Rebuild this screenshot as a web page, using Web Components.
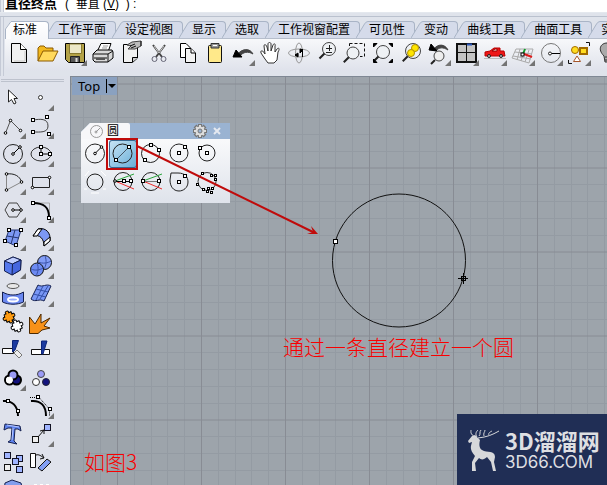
<!DOCTYPE html>
<html lang="zh-CN">
<head>
<meta charset="utf-8">
<title>Rhino</title>
<style>
html, body { margin: 0; height: 100%; overflow: hidden; }
body { font: 12px/16px "Liberation Sans", "Noto Sans CJK SC", sans-serif; color: #000; }
</style>
</head>
<body>
<cad-app></cad-app>
<script>
const sq = (x, y, f = '#fff', s = 3) => `<rect x="${x - s / 2}" y="${y - s / 2}" width="${s}" height="${s}" fill="${f}" stroke="#000"/>`;
const dot = (x, y) => `<circle cx="${x}" cy="${y}" r="1.3" fill="#fff" stroke="#000"/>`;
const circ = (x, y, r, f = 'none', s = '#222') => `<circle cx="${x}" cy="${y}" r="${r}" fill="${f}" stroke="${s}"/>`;
const p = (d, f = 'none', s = '#000', w = 1) => `<path d="${d}" fill="${f}" stroke="${s}" stroke-width="${w}"/>`;
const lens = (x, y, r) => circ(x, y, r, '#eef1f4', '#444') + p(`M${x - r * .7} ${y + r * .7}L${x - r * .7 - 5} ${y + r * .7 + 5}`, 'none', '#222', 2);
const blueSq = (x, y) => `<rect x="${x - 3}" y="${y - 3}" width="6" height="6" fill="#9fb4ff" stroke="#112"/>`;
const puzzle = (x, y, f) => `<g transform="translate(${x} ${y}) rotate(-25)">${p('M-3.500 -4H-1.500C-3 -7 3 -7 1.500 -4H4V-1.500C7 -3 7 3 4 1.500V4H1.500C3 7 -3 7 -1.500 4H-4V1.500C-7 3 -7 -3 -4 -1.500Z', f)}</g>`;

const ICONS = {
  doc: p('M6.500 4.500H15.500L21.500 10.500V23.500H6.500Z', '#f1f1f1') + p('M15.500 4.500V10.500H21.500', '#fff') + p('M20 12V22H9', 'none', '#c8c8c8'),
  open: p('M5 22V9L7 7H11L13 9H20V12', '#f2b91e', '#8b5a00') + p('M5 22L10 12H25L20 22Z', '#ffd95c', '#8b5a00'),
  save: p('M4.500 4.500H23.500V23.500H7.500L4.500 20.500Z', '#b3a247') + p('M8.500 5V14.500H20.500V5Z', '#ece8c8', '#887a30') + p('M9.500 23V17.500H18.500V23', '#555', '#222') + p('M15.500 19V23', 'none', '#ddd', 2),
  print: p('M8 13L12 4.500H22L19 13Z', '#fff') + p('M13 9H18M14 7H19', 'none', '#999') + p('M4 15L8 11H23L24 13V19L19 23H6L4 21Z', '#d9d9d9') + p('M4 15H19L24 12M19 15V23M5 19H18', 'none', '#111') + p('M7 20H16', 'none', '#555', 2),
  props: p('M6.500 5.500H20.500V19L15.500 23.500H6.500Z', '#f1f1f1') + p('M15.500 23V18.500H21', '#ccc') + p('M10 6L15 3L24 2V7L18 10H11L14 7Z', '#bbb', '#444') + p('M24 2V7M13 7L18 5M14 9L19 7', 'none', '#111'),
  cut: p('M8 6L17 18M20 6L11 18', 'none', '#444', 2) + p('M9 7L14 14L19 7', 'none', '#ccc') + circ(9.5, 20, 2.5, 'none', '#667') + circ(18.5, 20, 2.5, 'none', '#667'),
  copy: p('M7.500 4.500H13L17.500 9V18.500H7.500Z', '#fff') + p('M12.500 9.500H18L22.500 14V23.500H12.500Z', '#f3f3f3') + p('M18 9.500V14H22', '#fff'),
  paste: `<rect x="7.500" y="6.500" width="13" height="17" rx="1" fill="#ffe98a" stroke="#111"/>` + p('M10 9V4.500H18V9Z', '#999', '#333') + p('M12 6.500H16', 'none', '#fff'),
  undo: p('M8 16C13 9 21 9 24 15C19 12 14 13 11 17Z', '#444', '#444') + p('M4 18L7 11L13 18Z', '#000'),
  hand: p('M8 20L4 14C3 11 6 11 8 15L7 7C7 5 9 5 10 8L11 12L11 5C11 3 14 3 14 5V12L16 6C17 4 19 5 18 7L18 13L20 10C22 8 23 10 21 13L20 21L17 24H11Z', '#fff', '#333'),
  orbit: `<ellipse cx="14" cy="14" rx="10.500" ry="4" fill="none" stroke="#999"/><ellipse cx="14" cy="14" rx="3.500" ry="10" fill="none" stroke="#999"/>` + p('M10 16L13 14V18ZM18 11L15 10V14Z', '#000') + p('M13.500 16H10M17.500 10V18', 'none', '#000'),
  zoom: lens(16, 10, 6.5) + p('M13 9.500H19M16.500 6V12M13 13.500H19', 'none', '#222'),
  window: p('M8.500 4.500H23.500V17.500H19M8.500 4.500V7', 'none', '#111').replace('/>', ' stroke-dasharray="3 2"/>') + lens(12, 14, 6),
  extents: lens(14, 13, 6.5) + p('M4.500 4.500H8L4.500 8ZM23.500 4.500H20L23.500 8ZM4.500 23.500V20L8 23.500ZM23.500 23.500V20L20 23.500Z', '#000'),
  selected: lens(16, 12, 7.5) + circ(18, 9, 3.5, '#ffe500', '#b09000') + circ(14, 14, 3.5, '#ffe500', '#b09000'),
  undoview: p('M8 11C13 4 20 5 23 11C18 8 14 8 11 12Z', '#444', '#444') + p('M4 11L6 5L12 12Z', '#000') + circ(14, 17, 5, '#eee', '#444') + p('M10 21L6 25', 'none', '#222', 2),
  four: p('M4 5H23V23H4Z', '#c4c4c4', '#111', 2) + p('M13.500 4V23M4 13.500H23', 'none', '#111') + p('M14 5.500H19', 'none', '#2855b8', 2),
  car: p('M4 17V13L9 12L13 9H19V12H23L24 17Z', '#ed1717', '#b00') + p('M11 12L14 10H16V12Z', '#fff', '#900') + circ(8, 17, 1.5, '#bbb') + circ(20, 17, 1.5, '#bbb') + p('M3 19.500H25', 'none', '#bbb'),
  plane: p('M7 10H24L20 24L3 19ZM11 10L8 21M16 10L12 22M20 11L16 23M6 13L23 15M4 17L22 20', 'none', '#aaa') + p('M14 15L16 10', 'none', '#119c2a', 2) + p('M15 15L23 18', 'none', '#df1b1b', 2) + sq(13.5, 15.5),
  circle: circ(14, 14, 9.5, 'none', '#777') + p('M14 14.500H23') + circ(13, 14.5, 1.5, '#fff'),
  objects: circ(10, 11, 3.5, '#ffdc20', '#a16a00') + p('M15 9H22V15H15Z', '#ffdc20', '#a16a00', 2) + p('M12 17L15.500 22.500H8.500Z', '#fff', '#a6562a') + p('M21 3.500H24.500V7M3.500 21V24.500H7', 'none', '#111'),
  bulb: p('M11 17C4 10 8 4 14 4C20 4 24 10 17 17L16 23H12Z', '#aaa', '#333') + p('M12 18H16M12 21H16', 'none', '#333'),

  pointer: p('M8.500 6V18L11.500 15.500L14 20L16 19L14 14.500H17.500Z', '#fff', '#222'),
  point: circ(12.500, 13.500, 2, '#fff', '#333'),
  polyline: p('M5.500 21L10.500 8.500L20.500 18.500', 'none', '#555') + dot(5.5, 21) + dot(10.5, 8.5) + dot(20.5, 18.5),
  curve: p('M5 8C12 7 20 6 20 14C20 21 12 20 5 20', 'none', '#444') + sq(5, 8) + sq(19, 5) + sq(5, 20) + sq(21, 22),
  circ1: circ(13, 14, 9.5) + p('M13 14L20 7') + dot(13, 14) + dot(20, 7),
  ellipse: `<ellipse cx="13" cy="14" rx="10" ry="7" fill="none" stroke="#333"/>` + p('M13 7V14H22') + sq(13, 7) + sq(13, 14) + sq(22, 14),
  arc: p('M6.500 6C14 5 20 8 21.500 14', 'none', '#222') + p('M6.500 6V22L21.500 14', 'none', '#888') + dot(6.5, 6) + dot(21.5, 14) + dot(6.5, 22),
  rect: p('M4.500 9.500H21.500V19.500H4.500Z', 'none', '#222') + dot(4.5, 19.5) + dot(21.5, 9.5),
  poly: p('M5 14L9 7H17L21.500 14L17 21H9Z', 'none', '#444') + p('M13 14H20') + dot(13, 14) + dot(21, 14),
  fillet: p('M5 7H21.500V21', 'none', '#aaa') + p('M5 7C16 7 21 11 21 21', 'none', '#000', 2) + sq(5, 7) + sq(21, 22),
  surf: p('M9 6H21L16 22L5 17Z', '#7c98f3', '#24356f') + p('M15 6L11 20M7 12L19 14', 'none', '#24356f') + sq(9, 6) + sq(21, 6) + sq(16, 21) + sq(5, 17),
  sweep: p('M10 5C18 3 23 9 22 17L16 22C16 15 12 10 5 12Z', '#7c98f3') + p('M10 5L14 5L9 12L5 12ZM22 13V17L16 22V18Z', '#fff'),
  cube: p('M4.500 9L13 5L21 8L20.500 18L12 23L4.500 19Z', '#5578ed', '#15204f') + p('M4.500 9L13 5L21 8L12.500 12Z', '#c0ceff', '#15204f') + p('M12.500 12L21 8L20.500 18L12 23Z', '#4667df', '#15204f'),
  spheres: circ(16.5, 10.5, 7, '#839df6', '#111') + p('M17 4C19 9 18 14 16 17M10 10C15 12 20 11 23 9', 'none', '#3a52a8') + circ(9, 17.5, 6.5, '#6c8af2', '#111') + p('M9 11C11 16 10 20 8 24M3 17C7 19 12 18 15 16', 'none', '#3a52a8'),
  project: `<ellipse cx="13" cy="6" rx="6" ry="2.500" fill="#e8e8e8" stroke="#555"/>` + p('M2.500 12C9 16 17 16 23.500 12V22C17 25 9 25 2.500 22Z', '#6b88f0', '#15204f') + `<ellipse cx="13" cy="19.500" rx="5" ry="2" fill="#9cb0ff" stroke="#fff" stroke-width="2"/>`,
  mesh: p('M10 5C15 8 18 3 23 6L16 21C11 18 8 23 3 19Z', '#7997f6', '#15204f') + p('M15 6L8 20M20 6L12 19M8 9L20 12M5 14L18 17', 'none', '#3450a8'),
  puzzle: puzzle(9, 9, '#ff9b10') + puzzle(17, 18, '#fff'),
  explode: p('M1.500 25.500V9L7 16L13 6V15L22 10L16 18L22 20L14 22L10 25.500Z', '#f79118', '#4c2900'),
  trim: p('M2.500 12.500H13.500V17.500H2.500Z', '#fff', '#111') + p('M12.500 4.500H18.500L15 14L12.500 16Z', '#1b3aa0', '#0b2478') + p('M14 17L17 14L22 19L19 22Z', '#eee', '#777'),
  split: p('M3.500 13.500H21.500V18.500H3.500Z', '#fff', '#111') + p('M13.500 5H19L15 18H13.500Z', '#1b3aa0', '#0b2478'),
  group: `<g stroke-width="2">${circ(9.5, 16, 4.5, '#fff', '#000')}${circ(16.5, 16, 4.5, '#12127d', '#000')}${circ(13, 11, 4.5, '#9a9af6', '#000')}</g>` + circ(9.5, 16, 3, '#fff', '#fff'),
  ungroup: circ(13, 10, 3.5, '#9a9af6', '#444') + circ(8, 18, 3.5, '#fff', '#333') + circ(18, 18, 3.5, '#12127d', '#223'),
  edit: p('M3 9C12 8 18 14 18 24', 'none', '#000', 2) + sq(8, 9) + sq(18, 19),
  points: p('M3 9C13 8 18 14 18 24', 'none', '#000', 2) + p('M2 5.500H11L21.500 17V24', 'none', '#000').replace('/>', ' stroke-dasharray="1 1"/>') + sq(10, 5) + sq(22, 17),
  text: p('M5 4L20 6L21 11L18 9H15L14 21L17 24L8 22L11 20L12 8H8L4 10Z', '#5e83ee', '#15204f') + p('M7 5L19 7M13 8L12 20', 'none', '#b7c8ff'),
  move: p('M10 17L16 10M16 10V14M16 10L12 11', 'none', '#111') + blueSq(19.5, 7.5) + `<rect x="4.500" y="16.500" width="6" height="6" fill="#eee" stroke="#111"/>`,
  array: blueSq(7.5, 7.5) + blueSq(19.5, 10.5) + blueSq(15.5, 13.5) + `<rect x="4.500" y="16.500" width="6" height="6" fill="#eee" stroke="#111"/>` + blueSq(19.5, 21.5),
  rotate: p('M2.500 5.500H7.500V19.500H2.500Z', '#fff', '#111') + p('M8 7C11 6 13 8 16 10M16 10L12 11M16 10L14 6', 'none', '#111') + p('M10 20L19 11L23 14L14 23Z', '#839ff5', '#111'),
  hull: p('M5 7L12 4L21 7L23 15L12 20L4 15Z', '#829eed', '#15204f'),
  dots: p('M6 9H9M12 9H15M18 9H21M6 14H9M12 14H15M18 14H21', 'none', '#fff', 2),

  cCenter: circ(14, 13.5, 9.5) + p('M14 13.500L20.500 7') + dot(14, 13.5) + dot(20.5, 7),
  cDiameter: circ(13.5, 13.5, 9.5) + p('M7 20L20 7', 'none', '#456') + sq(20, 7) + sq(7, 20),
  c3pt: circ(13.5, 13.5, 9) + sq(14, 5) + sq(22, 10) + sq(8, 20),
  cAround: circ(14, 13, 9) + sq(20, 7) + sq(14, 13),
  cTangent: circ(14, 13, 8) + sq(7, 8) + sq(14, 13),
  cTan3: p('M4 8L8 3M20 3L25 8M3 21H6M22 21H25M10 25H18', 'none', '#fff') + circ(14, 14, 8),
  cPlumb: circ(14, 13.5, 9) + p('M6 13L25 6', 'none', '#29a43b') + p('M6 13L25 21', 'none', '#ed2c2c') + p('M6 13.500H23') + sq(15, 13) + sq(22, 13) + dot(6, 13),
  cPlumb2: circ(14, 13.5, 9) + p('M6 13L25 6', 'none', '#29a43b') + p('M6 13L25 21', 'none', '#ed2c2c') + p('M6 13.500H22', 'none', '#777') + sq(6, 13) + sq(22, 13),
  cDeform: p('M6 5H13C20 5 23 9 23 14C23 20 18 23 14 23C8 23 5 18 5 12Z', 'none', '#222') + sq(20, 8) + sq(14, 14),
  cFit: circ(14, 13.5, 9, 'none', '#333') + [[9, 5], [18, 7], [22, 7], [22, 11], [4, 16], [10, 21], [14, 23], [15, 20], [19, 20], [18, 24]].map(a => sq(a[0] + .5, a[1] + .5, '#fff', 2)).join(''),
};

const define = (name, markup, setup) => {
  const template = document.createElement('template');
  template.innerHTML = markup;
  customElements.define(name, class extends HTMLElement {
    constructor() {
      super();
      this.attachShadow({ mode: 'open' }).append(template.content.cloneNode(true));
    }
    connectedCallback() { if (setup) setup(this, this.shadowRoot); }
  });
};

define('tool-button', `
<style>
:host { display: block; flex: none; width: 28px; height: 28px; }
button { display: block; position: relative; width: 100%; height: 100%; margin: 0; padding: 0; border: 0; background: none; }
svg { display: block; width: 28px; height: 28px; overflow: visible; }
:host([flyout]) button::after { content: ""; position: absolute; right: 2px; bottom: 1px; border: 3px solid #747474; border-top-color: transparent; border-left-color: transparent; }
:host([active]) button { border-radius: 3px; background: linear-gradient(135deg, #c9e4f5, #66add6); box-shadow: inset 0 0 0 1px #39678f; }
</style>
<button type="button"><svg viewBox="0 0 28 28" aria-hidden="true"></svg></button>`, (el, root) => {
  root.querySelector('svg').innerHTML = ICONS[el.getAttribute('icon')];
  root.querySelector('button').setAttribute('aria-label', el.getAttribute('icon'));
});

const makeTools = list => list.split(' ').map(n => n.endsWith('+')
  ? `<tool-button icon="${n.slice(0, -1)}" flyout></tool-button>`
  : n.endsWith('*') ? `<tool-button icon="${n.slice(0, -1)}" active></tool-button>`
  : `<tool-button icon="${n}"></tool-button>`).join('');

define('command-line', `
<style>
:host { display: flex; align-items: flex-end; height: 12px; padding-left: 5px; overflow: hidden; border-bottom: 1px solid #e4e8ee; background: linear-gradient(90deg, #c5cad6 1px, #e4e8ee 1px, #e4e8ee 3px, #c5cad6 3px, #c5cad6 4px, #fff 4px); white-space: pre; }
b { font-size: 13px; line-height: 16px; }
span { line-height: 16px; padding-left: 8px; }
</style>
<b>直径终点</b><span>(  垂直 (<u>V</u>)  ) :</span>`);

define('tab-item', `
<style>
:host { display: flex; flex: none; position: relative; height: 17px; margin-right: -4px; }
svg { flex: none; width: 12px; height: 17px; }
button { margin: 0; padding: 0 9px 0 1px; border: 0 solid #a9b4c6; border-width: 1px 1px 0 0; border-radius: 0 4px 0 0; background: #d5dbea; font: inherit; line-height: 15px; color: #000; white-space: nowrap; box-sizing: border-box; }
path { fill: #d5dbea; stroke: none; } .edge { fill: none; stroke: #a9b4c6; }
:host([active]) { z-index: 1; height: 18px; }
:host([active]) svg { width: 6px; height: 18px; }
:host([active]) button { padding: 0 11px 0 2px; background: linear-gradient(#fff, #f6f7fa); }
:host([active]) path { fill: #fcfcfd; } :host([active]) .edge { fill: none; }
</style>
<svg aria-hidden="true"><path/><path class="edge"/></svg><button type="button" role="tab"><slot></slot></button>`, (el, root) => {
  const [fill, edge] = root.querySelectorAll('path');
  const on = el.hasAttribute('active');
  fill.setAttribute('d', on ? 'M0 18V8L6 0V18Z' : 'M0 17L9 2L12 0V17Z');
  edge.setAttribute('d', on ? 'M.5 18V8L6 .5' : 'M0 17L8.500 3Q10 .5 12 .5');
});

define('tool-ribbon', `
<style>
:host { display: block; overflow: hidden; padding-top: 3px; background: #dfe3eb; }
.band { border-top: 1px solid #bac1ce; padding: 4px 0 5px 5px; background: linear-gradient(90deg, #c5cad6 1px, transparent 1px, transparent 3px, #c5cad6 3px, #c5cad6 4px, transparent 4px); }
.tabs { display: flex; height: 17px; border-bottom: 1px solid #b5bdcb; }
.tools { display: flex; padding-bottom: 4px; background: linear-gradient(#f7f8fa, #dfe2eb); }
</style>
<div class="band"><div class="tabs" role="tablist">
<tab-item active>标准</tab-item><tab-item>工作平面</tab-item><tab-item>设定视图</tab-item><tab-item>显示</tab-item><tab-item>选取</tab-item><tab-item>工作视窗配置</tab-item><tab-item>可见性</tab-item><tab-item>变动</tab-item><tab-item>曲线工具</tab-item><tab-item>曲面工具</tab-item><tab-item>实体工具</tab-item>
</div><div class="tools">${makeTools('doc open save+ print props cut copy paste undo+ hand orbit zoom window extents selected undoview+ four+ car+ plane+ circle+ objects+ bulb+')}</div></div>`);

define('side-tools', `
<style>
:host { display: block; flex: none; box-sizing: border-box; width: 70px; padding-top: 3px; overflow: hidden; background: #dfe2eb; }
.grip { height: 1px; width: 63px; margin: 0 0 2px 1px; border: 1px solid #bdc2cd; border-width: 1px 0; }
.grid { display: grid; grid-template-columns: 28px 28px; }
</style>
<div class="grip"></div>
<div class="grid">${makeTools('pointer point+ polyline+ curve+ circ1+ ellipse+ arc+ rect+ poly+ fillet+ surf+ sweep+ cube+ spheres+ project+ mesh+ puzzle explode trim split group+ ungroup edit points+ text move+ array rotate hull dots')}</div>`);

define('circle-palette', `
<style>
:host { display: block; width: 149px; background: linear-gradient(#fff, #dfe3eb); clip-path: polygon(9px 0, 100% 0, 100% 100%, 0 100%, 0 9px); }
header { display: flex; height: 16px; align-items: center; background: #9ab3d2; }
.title { display: flex; align-items: center; gap: 4px; flex: none; width: 49px; height: 16px; padding-left: 9px; box-sizing: border-box; background: #f7f7f9; border-radius: 0 2px 0 0; }
.title svg { flex: none; width: 13px; height: 13px; }
.title span { line-height: 16px; }
header button { padding: 0; border: 0; background: none; height: 16px; width: 17px; display: grid; place-items: center; }
.gear { margin-left: auto; }
.close { margin-right: 5px; }
.grid { display: grid; grid-template-columns: repeat(5, 28px); padding: 1px 0 7px; }
</style>
<header><div class="title"><svg viewBox="0 0 13 13" fill="none" stroke="#999" aria-hidden="true"><circle cx="6.500" cy="6.500" r="6"/><path d="M6 7L10 3"/><circle cx="6" cy="7" r="1"/></svg><span>圆</span></div>
<button type="button" class="gear" aria-label="选项"><svg width="14" height="14" viewBox="0 0 14 14"><g fill="none"><path d="M7 0V14M0 7H14M2 2L12 12M12 2L2 12" stroke="#777" stroke-width="4"/><circle cx="7" cy="7" r="5" fill="#ddd" stroke="#777"/><path d="M7 1V13M1 7H13M3 3L11 11M11 3L3 11" stroke="#dedede" stroke-width="2"/></g><circle cx="7" cy="7" r="2" fill="#9ab3d2" stroke="#777"/></svg></button>
<button type="button" class="close" aria-label="关闭"><svg width="8" height="8" viewBox="0 0 8 8"><path d="M1 1L7 7M7 1L1 7" stroke="#e5e9f0" stroke-width="2"/></svg></button></header>
<div class="grid">${makeTools('cCenter cDiameter* c3pt cAround cTangent cTan3 cPlumb cPlumb2 cDeform cFit')}</div>`);

define('brand-mark', `
<style>
:host { display: flex; align-items: center; gap: 5px; box-sizing: border-box; width: 150px; height: 71px; padding: 0 0 0 10px; background: #202e55; color: #dedfe2; }
svg { flex: none; width: 33px; height: 44px; }
div { display: flex; flex-direction: column; white-space: nowrap; }
b { font: 700 22px/24px "Noto Sans CJK SC", sans-serif; }
span { font: 400 17px/20px Inter, sans-serif; }
</style>
<svg viewBox="0 0 33 44" aria-hidden="true" fill="#d7d8da"><path d="M1 13L5 8L8 7L11 10L13 12C12 16 12 20 15 22C20 25 28 22 28 29L27 34L29 43H26L24 34L20 29C17 32 14 32 12 30L8 35L9 43H5V34L8 28C2 21 4 18 5 14L2 15Z"/><path d="M8 9C3 6 4 4 4 2M10 9C8 6 9 4 11 2M12 8C14 6 12 4 14 2M11 10C20 9 25 7 32 3M17 8C16 5 18 4 18 2M22 7C21 5 23 4 25 3" fill="none" stroke="#d7d8da"/></svg>
<div><b>3D溜溜网</b><span>3D66.COM</span></div>`);

define('view-port', `
<style>
:host { display: block; position: relative; flex: 1; min-width: 0; overflow: hidden; background: #9da4ab; box-shadow: inset 1px 1px #7f8894; }
.scene { display: block; position: absolute; inset: 0; width: 100%; height: 100%; }
.view { position: absolute; left: 2px; top: 1px; display: flex; align-items: center; height: 18px; padding: 0 1px 0 6px; border: 0; background: #8aa1c0; font: 13px/18px "Noto Sans", sans-serif; color: #000; gap: 5px; }
circle-palette { position: absolute; left: 11px; top: 47px; }
brand-mark { position: absolute; right: 0; bottom: 0; }
.note { position: absolute; margin: 0; font: 21px/28px "Noto Sans CJK SC", sans-serif; font-weight: 300; color: #f90000; white-space: nowrap; }
.main { left: 213px; top: 256px; }
.figure { left: 14px; top: 371px; }
</style>
<svg class="scene" aria-hidden="true">
<defs><pattern id="grid" x="47" y="7" width="84" height="84" patternUnits="userSpaceOnUse">
<path d="M17.500 0V84M34.500 0V84M50.500 0V84M67.500 0V84M0 17.500H84M0 34.500H84M0 51.500H84M0 68.500H84" stroke="#949ba3" fill="none"/>
<path d="M.5 0V84M0 1H84" stroke="#888c94" fill="none"/></pattern></defs>
<rect x="1" y="1" width="100%" height="100%" fill="url(#grid)"/>
<circle cx="329" cy="184.500" r="66.500" fill="none" stroke="#111"/>
<rect x="263.500" y="163.500" width="4" height="4" fill="#fff" stroke="#000"/>
<path d="M388 202.500H398M393.500 197V208" stroke="#000"/><rect x="391.500" y="200.500" width="4" height="4" fill="none" stroke="#000"/>
</svg>
<button type="button" class="view">Top<svg width="11" height="16" viewBox="0 0 11 16" aria-hidden="true"><path d="M1.500 1V15" stroke="#000"/><path d="M3 6H11L7 10Z"/></svg></button>
<circle-palette></circle-palette>
<svg class="scene" aria-hidden="true" style="pointer-events:none">
<rect x="37" y="63" width="30" height="30" fill="none" stroke="#c00b0b" stroke-width="2"/>
<path d="M67 70L245 157" stroke="#c00b0b" stroke-width="2"/><path d="M248 158L241 150L243 156L237 158Z" fill="#c00b0b"/>
</svg>
<p class="note main">通过一条直径建立一个圆</p><p class="note figure">如图3</p>
<brand-mark></brand-mark>`);

define('cad-app', `
<style>
:host { display: flex; flex-direction: column; height: 100vh; background: #dfe2eb; }
main { display: flex; flex: 1; min-height: 0; }
</style>
<command-line></command-line><tool-ribbon></tool-ribbon><main><side-tools></side-tools><view-port></view-port></main>`);
</script>
</body>
</html>
